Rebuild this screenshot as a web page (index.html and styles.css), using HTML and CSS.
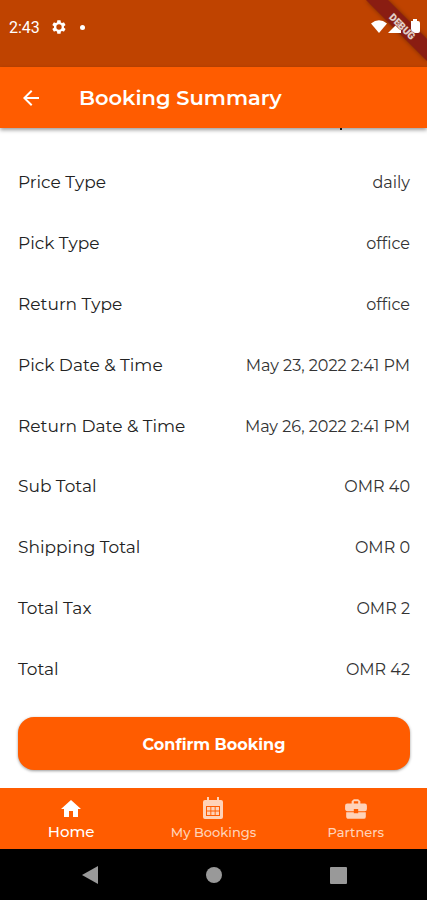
FILE: index.html
```html
<!DOCTYPE html>
<html lang="en">
<head>
<meta charset="utf-8">
<meta name="viewport" content="width=device-width, initial-scale=1">
<title>Booking Summary</title>
<link rel="stylesheet" href="styles.css">
</head>
<body>
<div class="status">
  <span class="clock">2:43</span>
  <svg class="gear" viewBox="0 0 24 24" aria-hidden="true"><path fill-rule="evenodd" d="M19.4 13a7.500 7.500 0 0 0 0-2l2.100-1.600a.5.5 0 0 0 .1-.6l-2-3.500a.5.5 0 0 0-.6-.2l-2.500 1a7.300 7.300 0 0 0-1.700-1l-.4-2.700a.5.5 0 0 0-.5-.4h-4a.5.5 0 0 0-.5.4L9 5.100a7.300 7.300 0 0 0-1.700 1l-2.500-1a.5.5 0 0 0-.6.2l-2 3.500a.5.5 0 0 0 .1.600L4.500 11a7.500 7.500 0 0 0 0 2l-2.200 1.600a.5.5 0 0 0-.1.600l2 3.500c.1.200.4.300.6.200l2.500-1a7.300 7.300 0 0 0 1.700 1l.4 2.700c0 .2.200.4.500.4h4c.3 0 .5-.2.500-.4l.4-2.700a7.300 7.300 0 0 0 1.700-1l2.500 1c.2.100.5 0 .6-.2l2-3.500a.5.5 0 0 0-.1-.6zM12 16a4 4 0 1 1 0-8 4 4 0 0 1 0 8z"/></svg>
  <span class="dot"></span>
  <svg class="ribbon band" viewBox="0 0 68 68" aria-hidden="true"><path d="M7 0H29L68 39V61Z"/></svg>
  <svg class="signals" viewBox="0 0 50 16" aria-hidden="true">
    <path d="M0 4.500Q8 -2 16 4.500L8 14Z"/>
    <path d="M17 14L30 1V14Z"/>
    <path d="M40 2h2V0h4v2h1q2 0 2 2v8q0 2-2 2h-5q-2 0-2-2z"/>
  </svg>
  <svg class="ribbon" viewBox="0 0 68 68" aria-hidden="true"><text x="43" y="30" transform="rotate(45 43 27)">DEBUG</text></svg>
</div>
<header class="appbar">
  <button class="back" aria-label="Back"><svg viewBox="0 0 24 24"><path d="M20 11H7.800l5.600-5.600L12 4l-8 8 8 8 1.400-1.400L7.800 13H20z"/></svg></button>
  <h1>Booking Summary</h1>
</header>
<main>
  <dl>
    <div><dt>Price Type</dt><dd>daily</dd></div>
    <div><dt>Pick Type</dt><dd>office</dd></div>
    <div><dt>Return Type</dt><dd>office</dd></div>
    <div><dt>Pick Date &amp; Time</dt><dd>May 23, 2022 2:41 PM</dd></div>
    <div><dt>Return Date &amp; Time</dt><dd>May 26, 2022 2:41 PM</dd></div>
    <div><dt>Sub Total</dt><dd>OMR 40</dd></div>
    <div><dt>Shipping Total</dt><dd>OMR 0</dd></div>
    <div><dt>Total Tax</dt><dd>OMR 2</dd></div>
    <div><dt>Total</dt><dd>OMR 42</dd></div>
  </dl>
  <button class="confirm">Confirm Booking</button>
</main>
<nav class="tabs">
  <a class="active" href="#home"><svg viewBox="0 0 24 24"><path d="M10 20v-6h4v6h5v-8h3L12 3 2 12h3v8z"/></svg><span>Home</span></a>
  <a href="#bookings"><svg viewBox="0 0 24 24"><path fill-rule="evenodd" d="M6 0h2v3h8V0h2v3h2q2 0 2 2v15q0 2-2 2H4q-2 0-2-2V5q0-2 2-2h2zM5 9v10h14V9z"/><path d="M6 10h3.400v3.500H6zm4.300 0h3.400v3.500h-3.400zm4.300 0H18v3.500h-3.400zM6 14.500h3.400V18H6zm4.300 0h3.400V18h-3.400zm4.300 0H18V18h-3.400z"/></svg><span>My Bookings</span></a>
  <a href="#partners"><svg viewBox="1 1 22 22"><path d="M10 16v-1H3v4c0 1.100.9 2 2 2h14a2 2 0 0 0 2-2v-4h-7v1zm10-9h-4V5l-2-2h-4L8 5v2H4a2 2 0 0 0-2 2v3c0 1.100.9 2 2 2h6v-2h4v2h6a2 2 0 0 0 2-2V9a2 2 0 0 0-2-2zm-6 0h-4V5h4z"/></svg><span>Partners</span></a>
</nav>
<div class="system">
  <button aria-label="Back"><svg viewBox="0 0 18 18"><path d="M17 0V18L1 9Z"/></svg></button>
  <button aria-label="Home"><svg viewBox="0 0 18 18"><circle cx="9" cy="9" r="8"/></svg></button>
  <button aria-label="Recent apps"><svg viewBox="0 0 18 18"><rect x="1" y="1" width="17" height="17" rx="1"/></svg></button>
</div>
</body>
</html>
```
FILE: styles.css
```css
* { box-sizing: border-box; }
body {
  margin: 0;
  min-height: 100vh;
  display: flex;
  flex-direction: column;
  background: #fff;
  color: #222;
  font-family: Montserrat, Inter, sans-serif;
}
button { border: 0; padding: 0; background: none; color: inherit; font: inherit; }
svg { display: block; fill: currentColor; }

.status {
  position: relative;
  height: 67px;
  padding: 0 6px 13px 9px;
  display: flex;
  align-items: center;
  background: #bf4300;
  color: #fff;
}
.clock { font: 16px Roboto, sans-serif; }
.gear { width: 16px; height: 16px; margin-left: 11px; }
.dot { width: 5px; height: 5px; margin-left: 13px; border-radius: 50%; background: #fff; }
.signals { position: relative; width: 50px; height: 16px; margin-left: auto; }
.ribbon { position: absolute; top: 0; right: 0; width: 68px; height: 68px; }
.band { filter: drop-shadow(0 0 2px #0006); fill: #8a1d12; }
.ribbon text {
  fill: #e5d0ca;
  stroke: #8a3a30;
  stroke-width: 1px;
  paint-order: stroke;
  font: 900 10px Roboto, sans-serif;
  text-anchor: middle;
}

.appbar {
  position: relative;
  height: 61px;
  padding: 1px 0 0 19px;
  display: flex;
  align-items: center;
  gap: 36px;
  background: #ff5c00;
  color: #fff;
  box-shadow: 0 2px 4px #0006;
}
.appbar::after {
  content: "";
  position: absolute;
  right: 85px;
  bottom: -2px;
  width: 2px;
  height: 2px;
  background: #111;
}
.back svg { width: 24px; height: 24px; }
h1 { margin: 0; font-size: 21px; line-height: 28px; font-weight: 600; }

main {
  flex: 1;
  display: flex;
  flex-direction: column;
  padding: 24px 17px 18px 18px;
}
dl { flex: 1; display: flex; flex-direction: column; margin: 0 0 18px; }
dl div { flex: 1; display: flex; align-items: center; justify-content: space-between; }
dt { font-size: 17px; line-height: 24px; }
dd { margin: 0; padding-top: 2px; font-size: 16px; line-height: 24px; color: #333; }
.confirm {
  height: 53px;
  padding-top: 2px;
  border-radius: 16px;
  background: #ff5c00;
  color: #fff;
  font-size: 16px;
  font-weight: 700;
  box-shadow: 0 1px 3px #0006;
}

.tabs {
  height: 61px;
  display: grid;
  grid-template-columns: repeat(3, 1fr);
  background: #ff5c00;
}
.tabs a {
  display: flex;
  flex-direction: column;
  align-items: center;
  padding-top: 9px;
  color: #ffd2b8;
  font-size: 13px;
  font-weight: 500;
  line-height: 22px;
  text-decoration: none;
}
.tabs a svg { width: 24px; height: 24px; }
.tabs .active { color: #fff; font-size: 15px; }

.system {
  height: 51px;
  display: flex;
  align-items: center;
  justify-content: center;
  gap: 106px;
  background: #000;
  color: #999;
}
.system svg { width: 18px; height: 18px; }
```
